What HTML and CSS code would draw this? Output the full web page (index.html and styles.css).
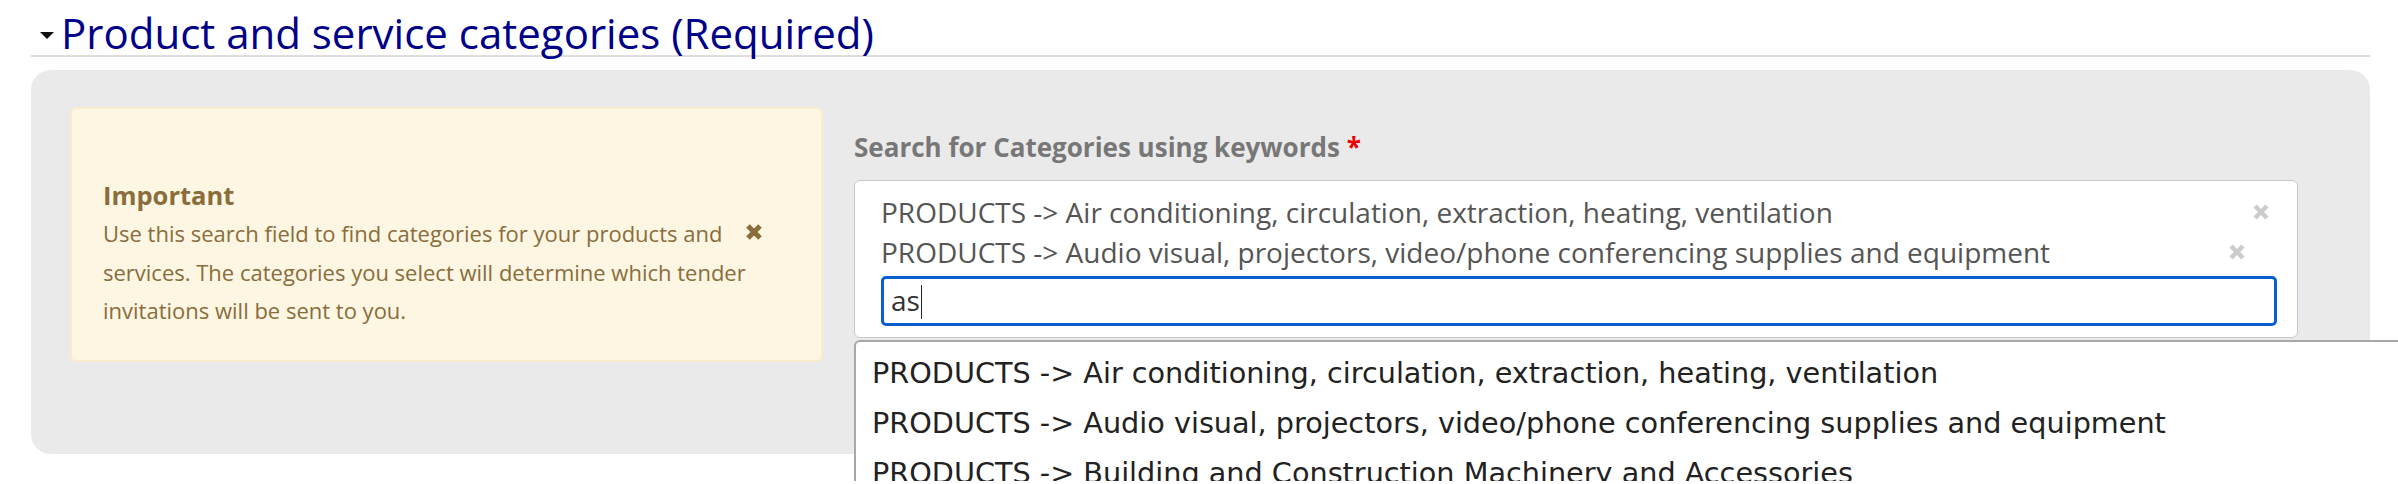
FILE: index.html
```html
<!DOCTYPE html>
<html lang="en">
<head>
<meta charset="utf-8">
<title>Product and service categories</title>
<link rel="stylesheet" href="styles.css">
</head>
<body>
<div class="page">
  <h2 class="section-title"><span class="toggle-caret"></span><span class="section-text">Product and service categories (Required)</span></h2>
  <div class="panel">
    <div class="alert">
      <div class="alert-body">
        <strong class="alert-title">Important</strong>
        <p class="alert-text">Use this search field to find categories for your products and services. The categories you select will determine which tender invitations will be sent to you.</p>
      </div>
      <span class="alert-close"><svg viewBox="0 0 18 18" width="18" height="18"><path d="M3 3L15 15M15 3L3 15" stroke="#8a6d3b" stroke-width="5" fill="none"/></svg></span>
    </div>
    <div class="field">
      <label class="field-label">Search for Categories using keywords <span class="req">*</span></label>
      <div class="multi">
        <div class="choice choice-a"><span>PRODUCTS -&gt; Air conditioning, circulation, extraction, heating, ventilation</span><svg class="choice-x" viewBox="0 0 18 18" width="18" height="18"><path d="M3 3L15 15M15 3L3 15" stroke="#cccccc" stroke-width="4.5" fill="none"/></svg></div>
        <div class="choice choice-b"><span>PRODUCTS -&gt; Audio visual, projectors, video/phone conferencing supplies and equipment</span><svg class="choice-x" viewBox="0 0 18 18" width="18" height="18"><path d="M3 3L15 15M15 3L3 15" stroke="#cccccc" stroke-width="4.5" fill="none"/></svg></div>
        <div class="search-input">as<span class="text-caret"></span></div>
      </div>
      <ul class="dropdown">
        <li>PRODUCTS -&gt; Air conditioning, circulation, extraction, heating, ventilation</li>
        <li>PRODUCTS -&gt; Audio visual, projectors, video/phone conferencing supplies and equipment</li>
        <li>PRODUCTS -&gt; Building and Construction Machinery and Accessories</li>
      </ul>
    </div>
  </div>
</div>
</body>
</html>
```

FILE: styles.css
```css
html {
  overflow: hidden;
}

body {
  margin: 0;
  padding: 0;
  min-height: 484px;
  background: #ffffff;
  font-family: "Open Sans", "Liberation Sans", sans-serif;
  color: #333;
}

.page {
  padding: 0 28px 0 31px;
}

.section-title {
  display: flex;
  align-items: flex-start;
  margin: 11px 0 0;
  font-size: 42px;
  line-height: 44px;
  font-weight: 400;
  color: #000088;
  border-bottom: 2px solid #dedede;
}

.toggle-caret {
  width: 0;
  height: 0;
  margin: 21px 7px 0 9px;
  border-left: 7.5px solid transparent;
  border-right: 7.5px solid transparent;
  border-top: 7px solid #111;
}

.panel {
  margin-top: 13px;
  display: grid;
  grid-template-columns: 753px 1444px;
  column-gap: 31px;
  align-items: start;
  padding: 37px 0 92px 39px;
  background: #eaeaea;
  border-radius: 20px;
}

.alert {
  box-sizing: border-box;
  display: flex;
  align-items: flex-start;
  padding: 67px 20px 30px 31px;
  background: #fcf6e3;
  border: 2px solid #faebcc;
  border-radius: 6px;
  color: #8a6d3b;
}

.alert-body {
  width: 668px;
  flex: none;
}

.alert-title {
  display: block;
  font-size: 25.5px;
  line-height: 38px;
  font-weight: 700;
}

.alert-text {
  margin: 0;
  font-size: 22px;
  line-height: 38.5px;
}

.alert-close {
  display: block;
  flex: none;
  width: 18px;
  height: 18px;
  margin: 47px 0 0 -26px;
}

.alert-close svg {
  display: block;
}

.field {
  position: relative;
}

.field-label {
  display: block;
  margin-top: 23px;
  font-size: 26px;
  line-height: 34px;
  font-weight: 700;
  color: #777;
}

.req {
  color: #ee0000;
}

.multi {
  box-sizing: border-box;
  margin-top: 16px;
  padding: 10.5px 20px 11.5px 26px;
  background: #fff;
  border: 1.5px solid #c8c8c8;
  border-radius: 6px;
}

.choice {
  display: flex;
  justify-content: space-between;
  align-items: center;
  font-size: 28px;
  line-height: 40px;
  color: #555;
}

.choice-a {
  padding-right: 7px;
}

.choice-b {
  padding-right: 31px;
}

.choice-x {
  display: block;
  flex: none;
}

.search-input {
  box-sizing: border-box;
  margin-top: 4px;
  height: 50px;
  padding-left: 7px;
  border: 3px solid #0a5fcf;
  border-radius: 5px;
  font-size: 28px;
  line-height: 42px;
  color: #333;
}

.text-caret {
  display: inline-block;
  width: 1.5px;
  height: 34px;
  margin-left: 1px;
  vertical-align: -8px;
  background: #222;
}

.dropdown {
  box-sizing: border-box;
  position: absolute;
  left: 0;
  top: calc(100% + 1.5px);
  width: 1544px;
  height: 141px;
  overflow: hidden;
  margin: 0;
  padding: 6px 0 0 16px;
  list-style: none;
  background: #fff;
  border-top: 2px solid #a8a8a8;
  border-left: 2px solid #a8a8a8;
  border-top-left-radius: 6px;
  font-family: "DejaVu Sans", Verdana, sans-serif;
  font-size: 28.7px;
  line-height: 50px;
  color: #222;
}

.dropdown li {
  white-space: nowrap;
}
```
